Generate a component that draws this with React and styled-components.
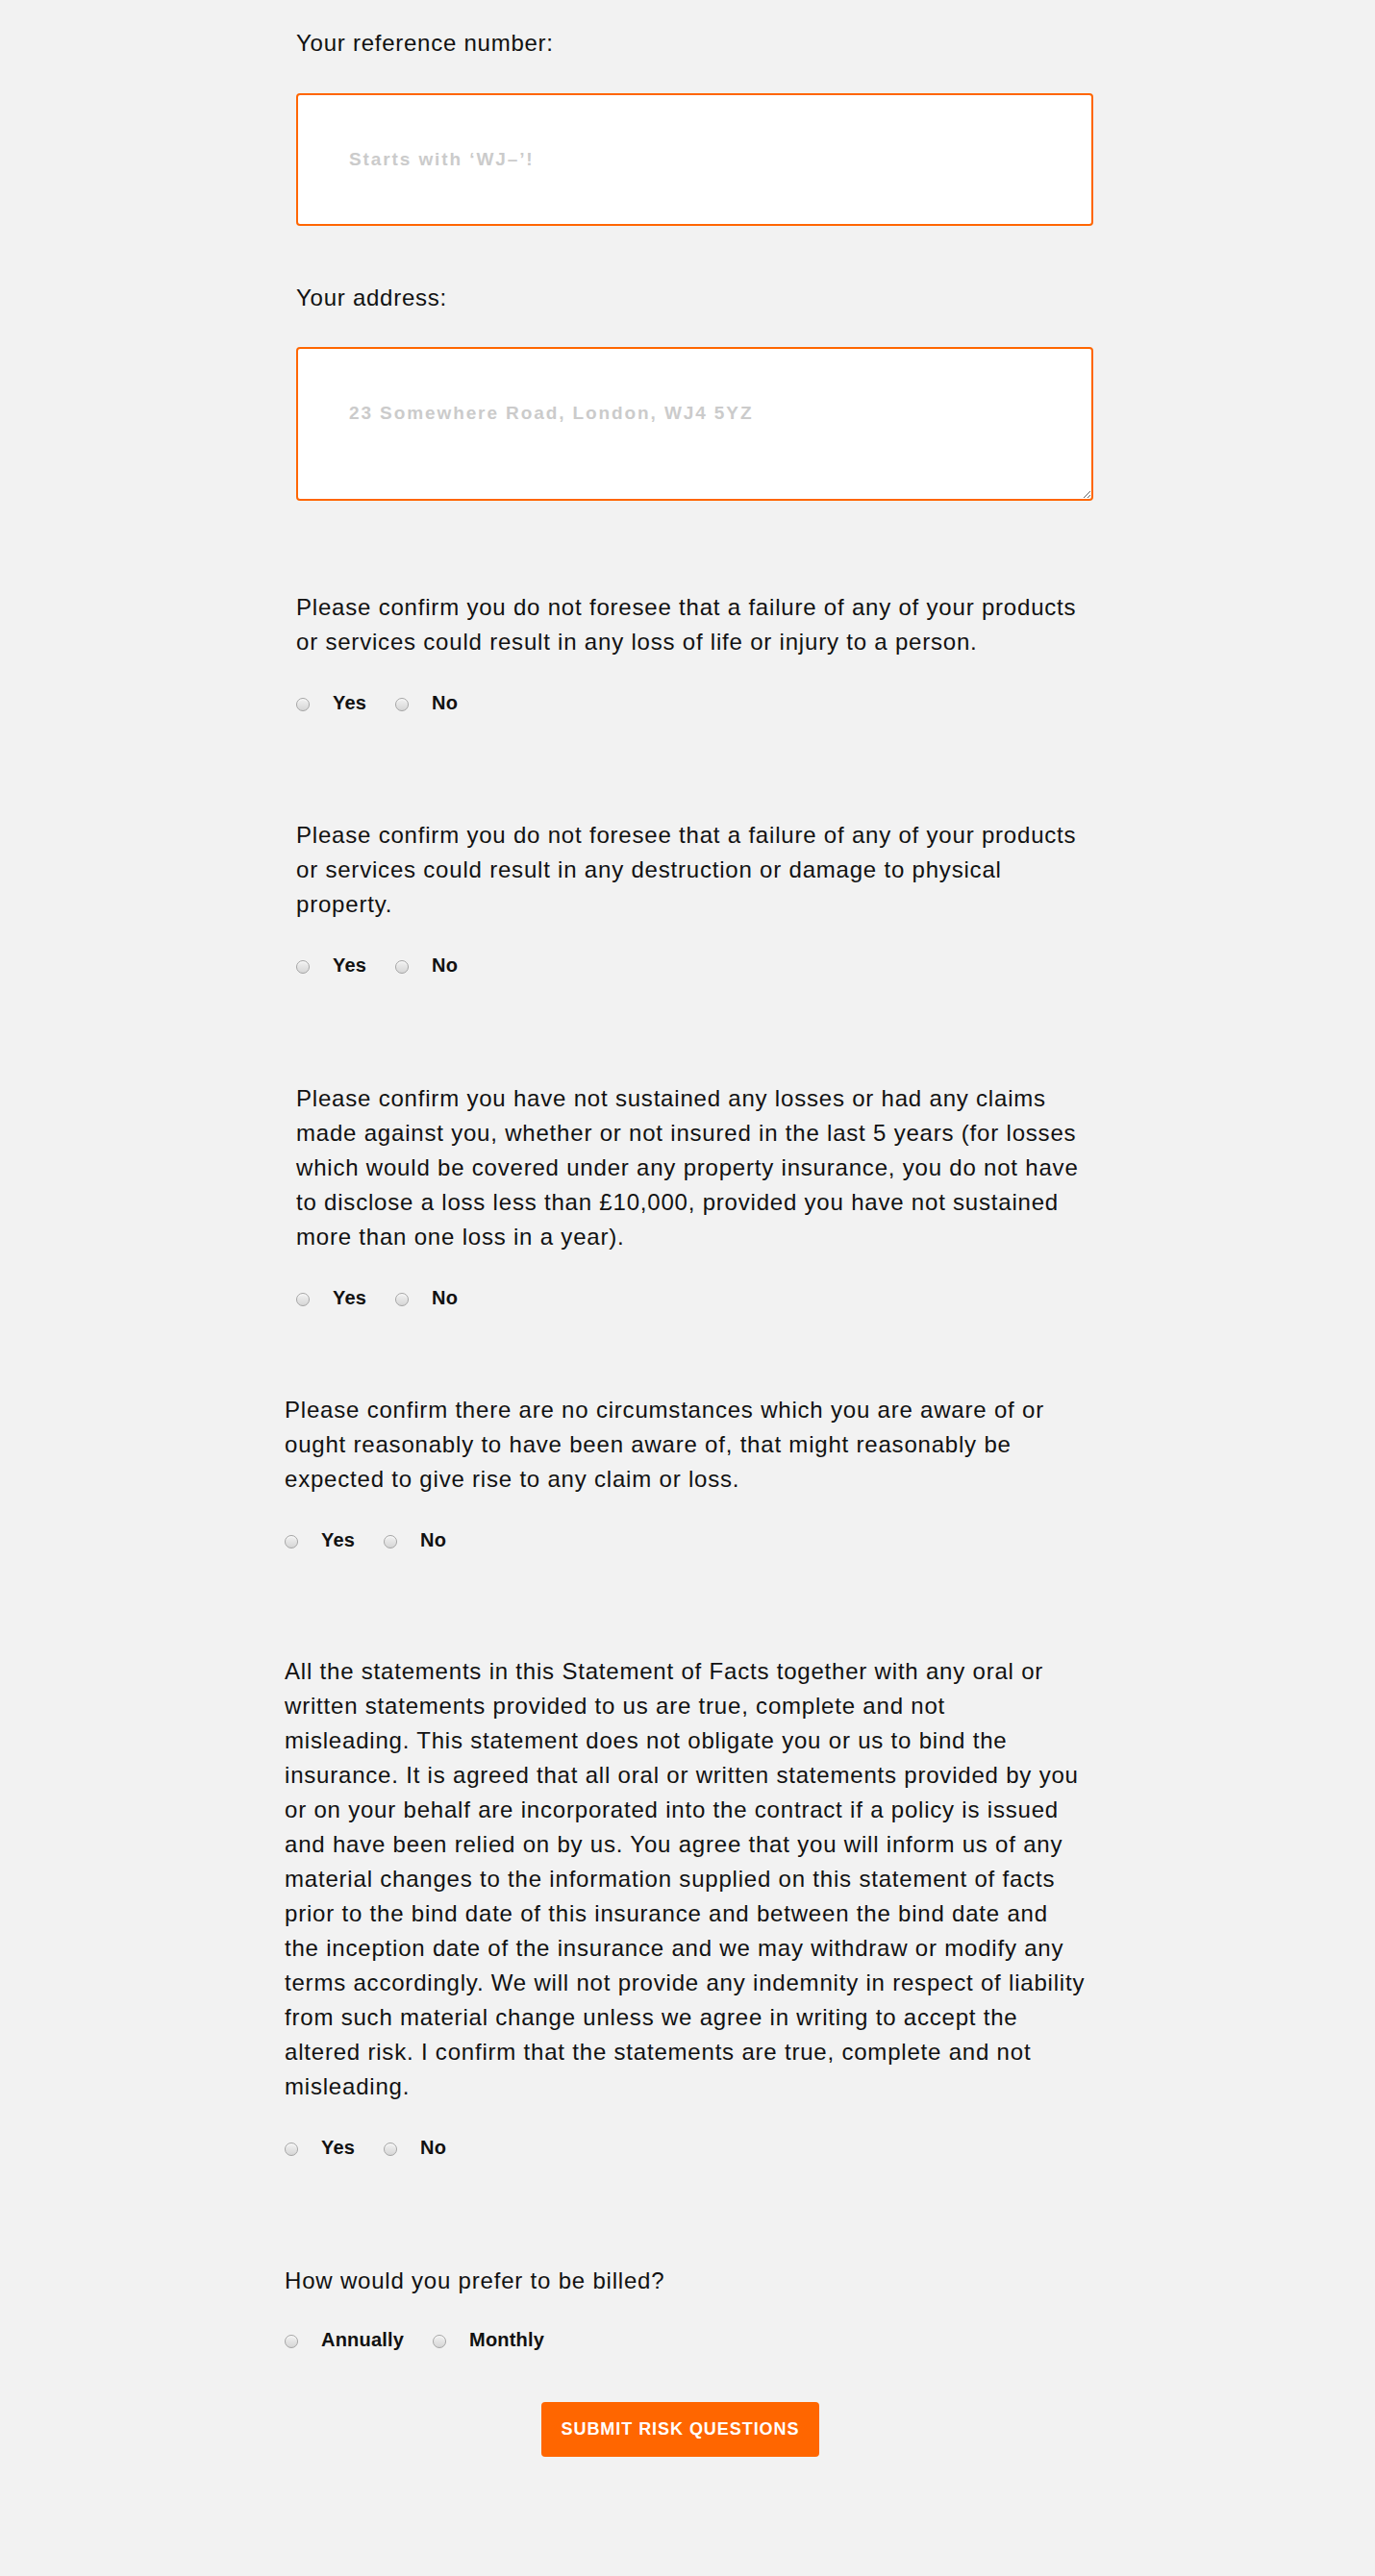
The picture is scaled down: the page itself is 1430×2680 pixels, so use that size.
import styled, { createGlobalStyle } from 'styled-components';

const GlobalStyle = createGlobalStyle`
    html, body {
        margin: 0;
        padding: 0;
        background: #f2f2f2;
    }
    body {
        font-family: "Liberation Sans", Arial, Helvetica, sans-serif;
        color: #111;
    }
`;

// lines are kept as in the design so the wrap does not depend on font metrics
const questions = [
    {
        id: 'q-injury',
        gap: 93,
        indent: true,
        lines: [
            'Please confirm you do not foresee that a failure of any of your products',
            'or services could result in any loss of life or injury to a person.',
        ],
    },
    {
        id: 'q-damage',
        gap: 108,
        indent: true,
        lines: [
            'Please confirm you do not foresee that a failure of any of your products',
            'or services could result in any destruction or damage to physical',
            'property.',
        ],
    },
    {
        id: 'q-claims',
        gap: 109,
        indent: true,
        lines: [
            'Please confirm you have not sustained any losses or had any claims',
            'made against you, whether or not insured in the last 5 years (for losses',
            'which would be covered under any property insurance, you do not have',
            'to disclose a loss less than £10,000, provided you have not sustained',
            'more than one loss in a year).',
        ],
    },
    {
        id: 'q-circumstances',
        gap: 87,
        indent: false,
        lines: [
            'Please confirm there are no circumstances which you are aware of or',
            'ought reasonably to have been aware of, that might reasonably be',
            'expected to give rise to any claim or loss.',
        ],
    },
    {
        id: 'q-statement',
        gap: 107,
        indent: false,
        lines: [
            'All the statements in this Statement of Facts together with any oral or',
            'written statements provided to us are true, complete and not',
            'misleading. This statement does not obligate you or us to bind the',
            'insurance. It is agreed that all oral or written statements provided by you',
            'or on your behalf are incorporated into the contract if a policy is issued',
            'and have been relied on by us. You agree that you will inform us of any',
            'material changes to the information supplied on this statement of facts',
            'prior to the bind date of this insurance and between the bind date and',
            'the inception date of the insurance and we may withdraw or modify any',
            'terms accordingly. We will not provide any indemnity in respect of liability',
            'from such material change unless we agree in writing to accept the',
            'altered risk. I confirm that the statements are true, complete and not',
            'misleading.',
        ],
    },
];

const RadioGroup = ({ name, options, gap }) => (
    <RadioRow $gap={gap}>
        {options.map((opt) => (
            <RadioOption key={opt}>
                <Radio type="radio" name={name} value={opt} />
                <RadioLabel>{opt}</RadioLabel>
            </RadioOption>
        ))}
    </RadioRow>
);

const App = () => {
    return (
        <Page>
            <GlobalStyle />
            <Column>
                <Section $indent>
                    <FieldLabel>Your reference number:</FieldLabel>
                    <TextInput type="text" placeholder="Starts with ‘WJ–’!" />
                </Section>

                <Section $indent $gap={57}>
                    <FieldLabel>Your address:</FieldLabel>
                    <AddressArea placeholder="23 Somewhere Road, London, WJ4 5YZ" />
                </Section>

                {questions.map((q) => (
                    <Section key={q.id} $indent={q.indent} $gap={q.gap}>
                        <Question>
                            {q.lines.map((line, i) => (
                                <Line key={i}>{line}</Line>
                            ))}
                        </Question>
                        <RadioGroup name={q.id} options={['Yes', 'No']} />
                    </Section>
                ))}

                <Section $gap={109}>
                    <Question>How would you prefer to be billed?</Question>
                    <RadioGroup name="billing" options={['Annually', 'Monthly']} gap={31} />
                </Section>

                <ButtonRow>
                    <SubmitButton type="button">Submit risk questions</SubmitButton>
                </ButtonRow>
            </Column>
        </Page>
    );
};

export default App;

const Page = styled.div`
    min-height: 2680px;
    background: #f2f2f2;
    padding-top: 27px;
    box-sizing: border-box;
`;

const Column = styled.form`
    width: 838px;
    margin: 0 auto;
`;

const Section = styled.div`
    display: flex;
    flex-direction: column;
    padding-left: ${(p) => (p.$indent ? '12px' : '0')};
    margin-top: ${(p) => p.$gap || 0}px;
`;

// body copy is Helvetica Neue in the design, Arial metrics run a bit narrow
const FieldLabel = styled.label`
    display: block;
    font-size: 24px;
    line-height: 36px;
    letter-spacing: 0.75px;
    color: #111;
`;

const fieldBase = `
    box-sizing: border-box;
    width: 829px;
    border: 2px solid #ff6600;
    border-radius: 4px;
    background: #fff;
    font-family: "Liberation Sans", Arial, sans-serif;
    font-size: 19px;
    font-weight: 700;
    letter-spacing: 1.9px;
    color: #555;
    outline: none;
    &::placeholder {
        color: #cbcbcb;
    }
`;

const TextInput = styled.input`
    ${fieldBase}
    margin-top: 34px;
    height: 138px;
    padding: 0 53px;
`;

const AddressArea = styled.textarea`
    ${fieldBase}
    margin-top: 33px;
    height: 160px;
    padding: 56px 53px;
    line-height: 1.2;
    resize: both;
`;

const Question = styled.p`
    margin: 0;
    font-size: 24px;
    line-height: 36px;
    letter-spacing: 0.8px;
    color: #111;
`;

const Line = styled.span`
    display: block;
    white-space: nowrap;
`;

const RadioRow = styled.div`
    display: flex;
    align-items: center;
    margin-top: ${(p) => p.$gap || 33}px;
    height: 24px;
`;

const RadioOption = styled.label`
    display: flex;
    align-items: center;
    margin-right: 30px;
`;

const Radio = styled.input`
    appearance: none;
    -webkit-appearance: none;
    box-sizing: border-box;
    width: 14px;
    height: 14px;
    margin: 4px 24px 0 0;
    border-radius: 50%;
    border: 1px solid #a4a4a4;
    background: linear-gradient(180deg, #f2f2f2 0%, #d6d6d6 100%);
    box-shadow: inset 0 1px 1px rgba(255, 255, 255, 0.8);
`;

const RadioLabel = styled.span`
    font-size: 20px;
    line-height: 24px;
    font-weight: 700;
    letter-spacing: 0.2px;
    color: #111;
`;

const ButtonRow = styled.div`
    display: flex;
    justify-content: center;
    padding-right: 15px;
    margin-top: 53px;
`;

const SubmitButton = styled.button`
    width: 289px;
    height: 57px;
    border: none;
    border-radius: 4px;
    background: #ff6600;
    color: #fff;
    font-family: "Liberation Sans", Arial, sans-serif;
    font-size: 18px;
    font-weight: 700;
    text-transform: uppercase;
    letter-spacing: 0.95px;
    cursor: pointer;
`;
